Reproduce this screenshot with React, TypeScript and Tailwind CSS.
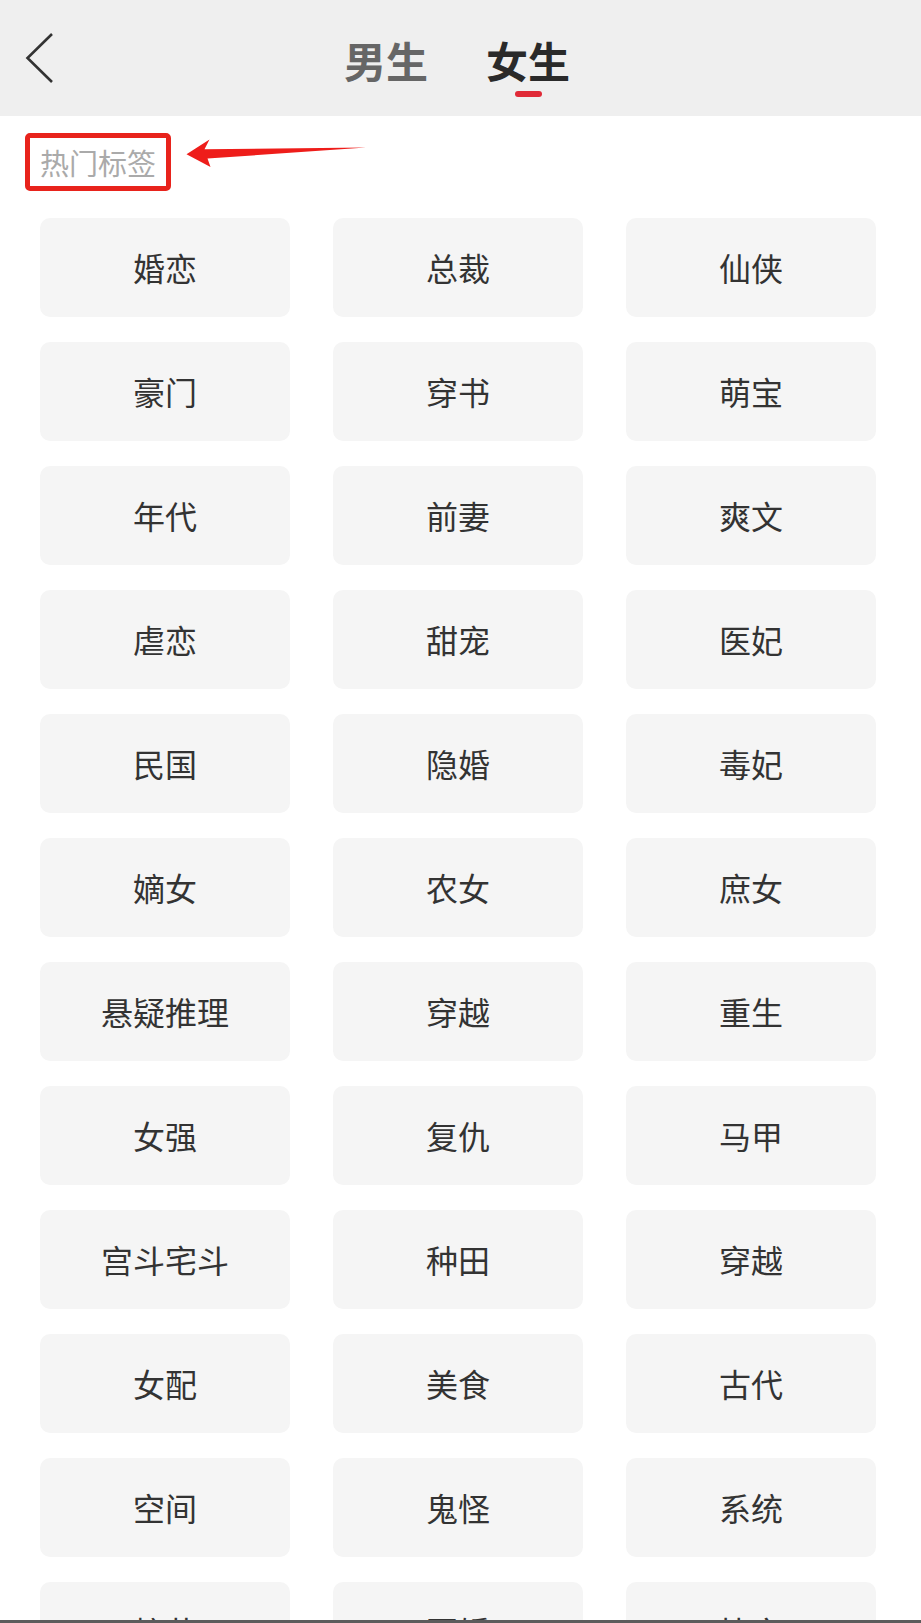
const TAGS = [
  ["婚恋", "总裁", "仙侠"],
  ["豪门", "穿书", "萌宝"],
  ["年代", "前妻", "爽文"],
  ["虐恋", "甜宠", "医妃"],
  ["民国", "隐婚", "毒妃"],
  ["嫡女", "农女", "庶女"],
  ["悬疑推理", "穿越", "重生"],
  ["女强", "复仇", "马甲"],
  ["宫斗宅斗", "种田", "穿越"],
  ["女配", "美食", "古代"],
  ["空间", "鬼怪", "系统"],
  ["校花", "军婚", "快穿"],
].flat();

const FONT = { fontFamily: '"Noto Sans CJK SC", "Noto Sans", sans-serif' };

function BackIcon() {
  return (
    <svg width="30" height="52" viewBox="25 35 30 52" className="ml-[25px] shrink-0">
      <polyline points="52,37 27.5,61 52,85" fill="none" stroke="#333" strokeWidth="2.6" strokeLinejoin="miter" />
    </svg>
  );
}

function Arrow() {
  // hand-drawn annotation arrow pointing at the label box
  return (
    <svg width="182" height="32" viewBox="185 137 182 32" className="mt-[4px] ml-[14px] shrink-0">
      <polygon
        points="186.5,154.3 209.5,139.5 204.5,149.3 366,147.6 207.5,158.6 210.5,167 "
        fill="#ee1d1a"
      />
    </svg>
  );
}

export default function App() {
  return (
    <div className="flex h-[1623px] w-[921px] flex-col overflow-hidden bg-white" style={FONT}>
      {/* Header */}
      <div className="flex h-[116px] shrink-0 items-center bg-[#efefef]">
        <BackIcon />
        <div className="ml-[289px] flex gap-[58px]">
          <div className="pt-[4px] text-[42px] font-bold leading-[52px] text-[#666]">男生</div>
          <div className="relative flex flex-col items-center pt-[4px]">
            <div className="text-[42px] font-bold leading-[52px] text-[#2a2a2a]">女生</div>
            <div className="absolute top-full mt-[5px] h-[6px] w-[27px] rounded-full bg-[#e02a37]" />
          </div>
        </div>
      </div>

      {/* Section label with annotation */}
      <div className="flex shrink-0 items-start pl-[25px] pt-[17px]">
        <div className="h-[58px] rounded-[5px] border-[5px] border-[#e8231c] pl-[10px] pr-[10px] text-[29px] leading-[48px] text-[#aaa]">
          热门标签
        </div>
        <Arrow />
      </div>

      {/* Tag grid */}
      <div className="grid flex-1 grid-cols-3 content-start gap-x-[43px] gap-y-[25px] overflow-hidden pl-[40px] pr-[45px] pt-[27px]">
        {TAGS.map((tag, i) => (
          <div
            key={i}
            className="flex h-[99px] items-center justify-center rounded-[10px] bg-[#f5f5f5] pb-[2px] text-[32px] text-[#333]"
          >
            {tag}
          </div>
        ))}
      </div>

      <div className="h-[3px] shrink-0 bg-[#5c5c5c]" />
    </div>
  );
}
